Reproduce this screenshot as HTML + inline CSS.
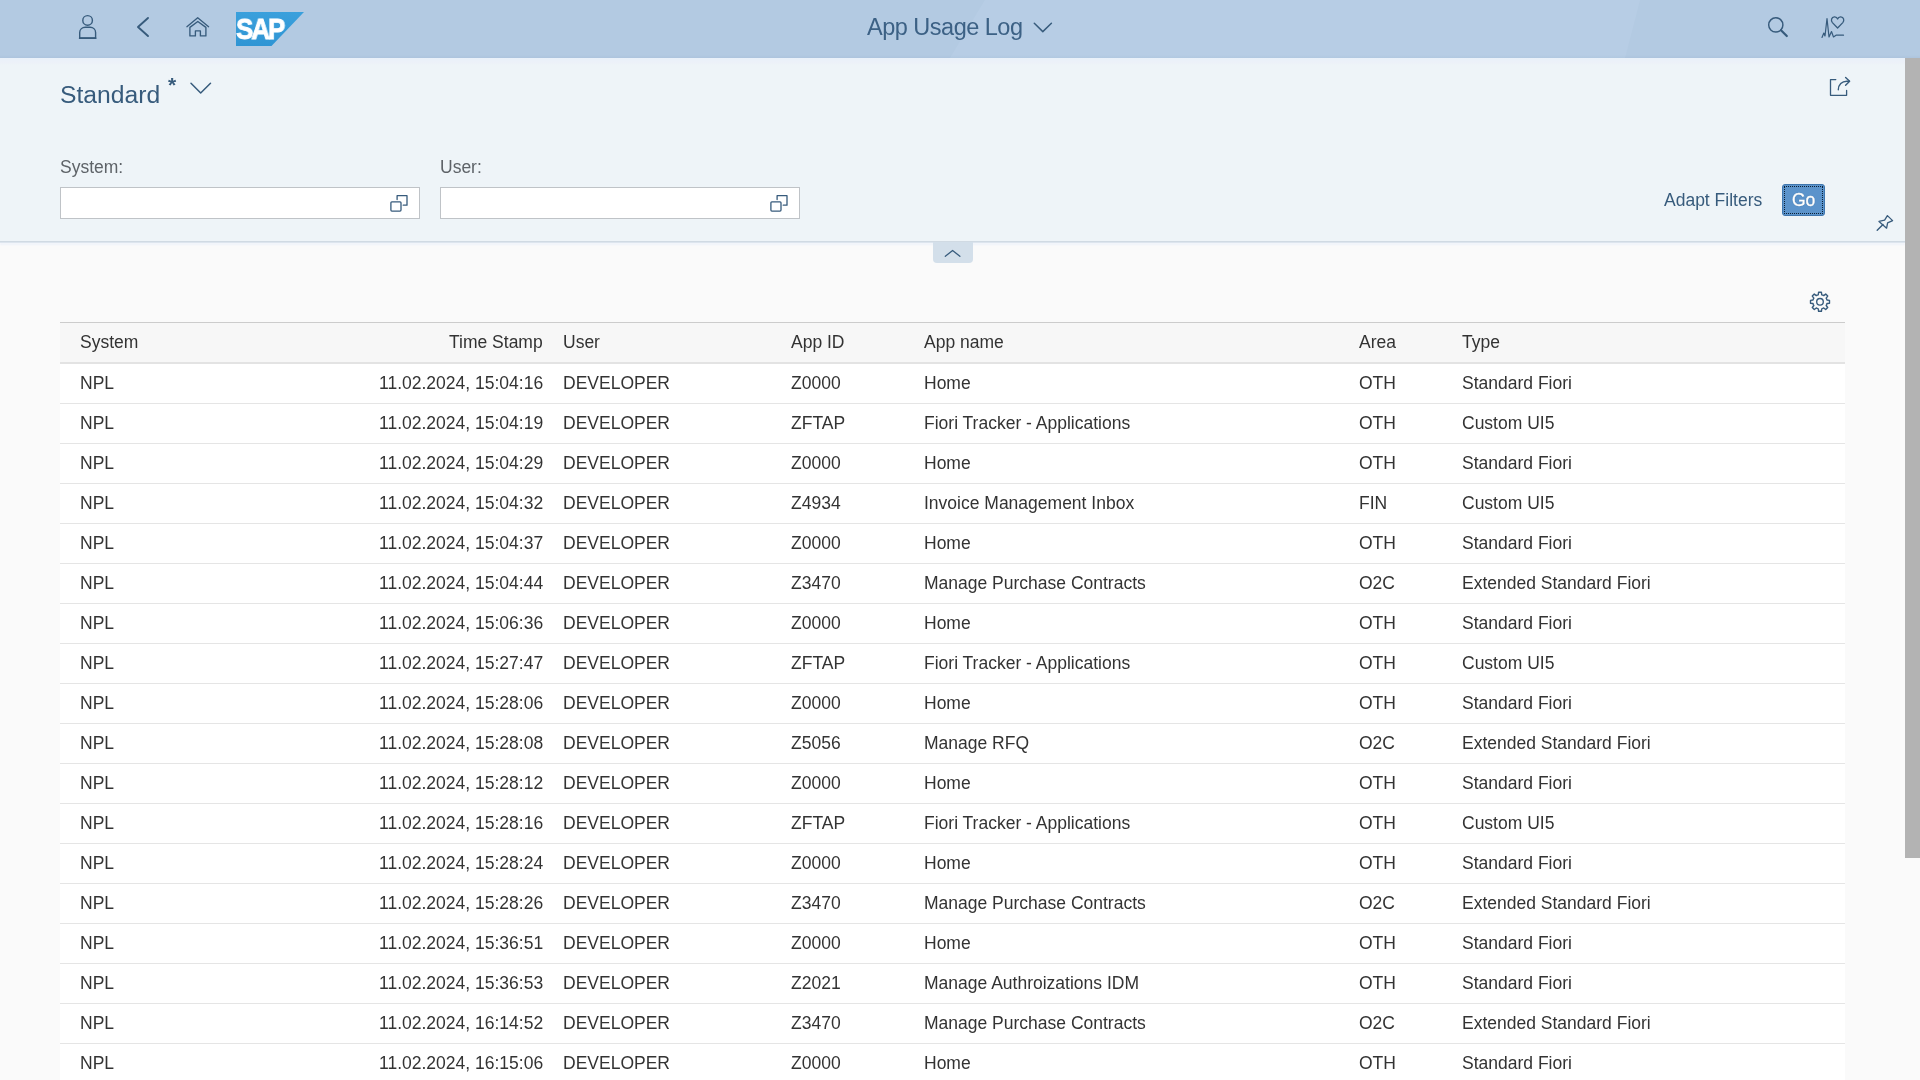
<!DOCTYPE html><html><head><meta charset="utf-8"><style>
*{margin:0;padding:0;box-sizing:border-box}
html,body{width:1920px;height:1080px;overflow:hidden;font-family:"Liberation Sans",sans-serif;background:#fafafa;color:#333}
#shell{position:absolute;left:0;top:0;width:1920px;height:58px;background:linear-gradient(#b3cae2 0,#b3cae2 55px,#adc4dd 58px);overflow:hidden}
#hdr{position:absolute;left:0;top:58px;width:1905px;height:183px;background:linear-gradient(#e9f1fa 0,#edf1f8 5px,#eef4f8 7px)}
#hline{position:absolute;left:0;top:241px;width:1905px;height:2px;background:linear-gradient(#d0dae3 50%,#dde5ee 50%);box-shadow:0 2px 2px #eef2fa}
#content{position:absolute;left:0;top:242px;width:1905px;height:838px;background:#fafafa}
#sb{position:absolute;left:1905px;top:58px;width:15px;height:800px;background:#b3b3b3}
#sbtrack{position:absolute;left:1905px;top:858px;width:15px;height:222px;background:#fafafa}
.t{position:absolute;white-space:nowrap;font-size:17.5px;line-height:20px;will-change:transform}
.row{position:absolute;left:60px;width:1785px;height:40px;background:#fff;border-bottom:1px solid #e5e5e5}
.thead{position:absolute;left:60px;top:322px;width:1785px;height:42px;background:#f7f7f7;border-top:1px solid #cccccc;border-bottom:2px solid #e3e3e3}
.inp{position:absolute;top:187px;width:360px;height:32px;background:#fff;border:1px solid #bfc3c7}
#icons{position:absolute;left:0;top:0;width:1920px;height:1080px;pointer-events:none}
.go{position:absolute;left:1782px;top:184px;width:43px;height:32px;background:#5b93cb;border:1px solid #3f76ae;border-radius:3px}
.go i{position:absolute;left:1px;top:1px;right:1px;bottom:1px;border:1px dotted #0b1f33}
.collapse{position:absolute;left:933px;top:242px;width:40px;height:21px;background:#d3dfea;border-radius:0 0 4px 4px}
</style></head><body><div id="shell"><div style="position:absolute;left:0;top:0;width:1920px;height:58px;background:linear-gradient(#b7cde5 0,#b7cde5 55px,#b1c8e0 58px);clip-path:polygon(985px 0,1640px 0,1625px 58px,950px 58px)"></div></div>
<div id="hdr"></div>
<div id="content"></div>
<div id="hline"></div>
<div class="t" style="left:867px;top:14px;font-size:23.5px;letter-spacing:-0.5px;line-height:26px;color:#3c6185">App Usage Log</div>
<div style="position:absolute;left:236px;top:12px;width:68px;height:34px;background:linear-gradient(#3aa0dc,#2f95d4);clip-path:polygon(0 0,100% 0,52.2% 100%,0 100%)"></div>
<div style="position:absolute;left:236px;top:12px;font-family:'Liberation Sans';font-weight:bold;font-size:29px;line-height:34px;color:#fff;letter-spacing:-2.4px;transform:scaleX(0.9);transform-origin:0 0;-webkit-text-stroke:0.9px #fff;will-change:transform">SAP</div>
<div class="t" style="left:60px;top:81px;font-size:24.7px;line-height:28px;color:#375b7c">Standard</div>
<div class="t" style="left:168px;top:75px;font-size:21px;font-weight:bold;line-height:20px;color:#375b7c">*</div>
<div class="t" style="left:60px;top:157px;color:#5e6368">System:</div>
<div class="t" style="left:440px;top:157px;color:#5e6368">User:</div>
<div class="inp" style="left:60px"></div>
<div class="inp" style="left:440px"></div>
<div class="t" style="left:1664px;top:190px;color:#375b7c">Adapt Filters</div>
<div class="go"><i></i></div>
<div class="t" style="left:1792px;top:190px;color:#fff;-webkit-text-stroke:0.35px #fff;text-shadow:0 0 1px #1f4a75">Go</div>
<div class="collapse"></div>
<div class="thead"></div>
<div class="t" style="left:80px;top:332px;">System</div>
<div class="t" style="left:563px;top:332px;">User</div>
<div class="t" style="left:791px;top:332px;">App ID</div>
<div class="t" style="left:924px;top:332px;">App name</div>
<div class="t" style="left:1359px;top:332px;">Area</div>
<div class="t" style="left:1462px;top:332px;">Type</div>
<div class="t" style="right:1377px;top:332px;">Time Stamp</div>
<div class="row" style="top:364px"></div>
<div class="t" style="left:80px;top:373px;">NPL</div>
<div class="t" style="right:1377px;top:373px;">11.02.2024, 15:04:16</div>
<div class="t" style="left:563px;top:373px;">DEVELOPER</div>
<div class="t" style="left:791px;top:373px;">Z0000</div>
<div class="t" style="left:924px;top:373px;">Home</div>
<div class="t" style="left:1359px;top:373px;">OTH</div>
<div class="t" style="left:1462px;top:373px;">Standard Fiori</div>
<div class="row" style="top:404px"></div>
<div class="t" style="left:80px;top:413px;">NPL</div>
<div class="t" style="right:1377px;top:413px;">11.02.2024, 15:04:19</div>
<div class="t" style="left:563px;top:413px;">DEVELOPER</div>
<div class="t" style="left:791px;top:413px;">ZFTAP</div>
<div class="t" style="left:924px;top:413px;">Fiori Tracker - Applications</div>
<div class="t" style="left:1359px;top:413px;">OTH</div>
<div class="t" style="left:1462px;top:413px;">Custom UI5</div>
<div class="row" style="top:444px"></div>
<div class="t" style="left:80px;top:453px;">NPL</div>
<div class="t" style="right:1377px;top:453px;">11.02.2024, 15:04:29</div>
<div class="t" style="left:563px;top:453px;">DEVELOPER</div>
<div class="t" style="left:791px;top:453px;">Z0000</div>
<div class="t" style="left:924px;top:453px;">Home</div>
<div class="t" style="left:1359px;top:453px;">OTH</div>
<div class="t" style="left:1462px;top:453px;">Standard Fiori</div>
<div class="row" style="top:484px"></div>
<div class="t" style="left:80px;top:493px;">NPL</div>
<div class="t" style="right:1377px;top:493px;">11.02.2024, 15:04:32</div>
<div class="t" style="left:563px;top:493px;">DEVELOPER</div>
<div class="t" style="left:791px;top:493px;">Z4934</div>
<div class="t" style="left:924px;top:493px;">Invoice Management Inbox</div>
<div class="t" style="left:1359px;top:493px;">FIN</div>
<div class="t" style="left:1462px;top:493px;">Custom UI5</div>
<div class="row" style="top:524px"></div>
<div class="t" style="left:80px;top:533px;">NPL</div>
<div class="t" style="right:1377px;top:533px;">11.02.2024, 15:04:37</div>
<div class="t" style="left:563px;top:533px;">DEVELOPER</div>
<div class="t" style="left:791px;top:533px;">Z0000</div>
<div class="t" style="left:924px;top:533px;">Home</div>
<div class="t" style="left:1359px;top:533px;">OTH</div>
<div class="t" style="left:1462px;top:533px;">Standard Fiori</div>
<div class="row" style="top:564px"></div>
<div class="t" style="left:80px;top:573px;">NPL</div>
<div class="t" style="right:1377px;top:573px;">11.02.2024, 15:04:44</div>
<div class="t" style="left:563px;top:573px;">DEVELOPER</div>
<div class="t" style="left:791px;top:573px;">Z3470</div>
<div class="t" style="left:924px;top:573px;">Manage Purchase Contracts</div>
<div class="t" style="left:1359px;top:573px;">O2C</div>
<div class="t" style="left:1462px;top:573px;">Extended Standard Fiori</div>
<div class="row" style="top:604px"></div>
<div class="t" style="left:80px;top:613px;">NPL</div>
<div class="t" style="right:1377px;top:613px;">11.02.2024, 15:06:36</div>
<div class="t" style="left:563px;top:613px;">DEVELOPER</div>
<div class="t" style="left:791px;top:613px;">Z0000</div>
<div class="t" style="left:924px;top:613px;">Home</div>
<div class="t" style="left:1359px;top:613px;">OTH</div>
<div class="t" style="left:1462px;top:613px;">Standard Fiori</div>
<div class="row" style="top:644px"></div>
<div class="t" style="left:80px;top:653px;">NPL</div>
<div class="t" style="right:1377px;top:653px;">11.02.2024, 15:27:47</div>
<div class="t" style="left:563px;top:653px;">DEVELOPER</div>
<div class="t" style="left:791px;top:653px;">ZFTAP</div>
<div class="t" style="left:924px;top:653px;">Fiori Tracker - Applications</div>
<div class="t" style="left:1359px;top:653px;">OTH</div>
<div class="t" style="left:1462px;top:653px;">Custom UI5</div>
<div class="row" style="top:684px"></div>
<div class="t" style="left:80px;top:693px;">NPL</div>
<div class="t" style="right:1377px;top:693px;">11.02.2024, 15:28:06</div>
<div class="t" style="left:563px;top:693px;">DEVELOPER</div>
<div class="t" style="left:791px;top:693px;">Z0000</div>
<div class="t" style="left:924px;top:693px;">Home</div>
<div class="t" style="left:1359px;top:693px;">OTH</div>
<div class="t" style="left:1462px;top:693px;">Standard Fiori</div>
<div class="row" style="top:724px"></div>
<div class="t" style="left:80px;top:733px;">NPL</div>
<div class="t" style="right:1377px;top:733px;">11.02.2024, 15:28:08</div>
<div class="t" style="left:563px;top:733px;">DEVELOPER</div>
<div class="t" style="left:791px;top:733px;">Z5056</div>
<div class="t" style="left:924px;top:733px;">Manage RFQ</div>
<div class="t" style="left:1359px;top:733px;">O2C</div>
<div class="t" style="left:1462px;top:733px;">Extended Standard Fiori</div>
<div class="row" style="top:764px"></div>
<div class="t" style="left:80px;top:773px;">NPL</div>
<div class="t" style="right:1377px;top:773px;">11.02.2024, 15:28:12</div>
<div class="t" style="left:563px;top:773px;">DEVELOPER</div>
<div class="t" style="left:791px;top:773px;">Z0000</div>
<div class="t" style="left:924px;top:773px;">Home</div>
<div class="t" style="left:1359px;top:773px;">OTH</div>
<div class="t" style="left:1462px;top:773px;">Standard Fiori</div>
<div class="row" style="top:804px"></div>
<div class="t" style="left:80px;top:813px;">NPL</div>
<div class="t" style="right:1377px;top:813px;">11.02.2024, 15:28:16</div>
<div class="t" style="left:563px;top:813px;">DEVELOPER</div>
<div class="t" style="left:791px;top:813px;">ZFTAP</div>
<div class="t" style="left:924px;top:813px;">Fiori Tracker - Applications</div>
<div class="t" style="left:1359px;top:813px;">OTH</div>
<div class="t" style="left:1462px;top:813px;">Custom UI5</div>
<div class="row" style="top:844px"></div>
<div class="t" style="left:80px;top:853px;">NPL</div>
<div class="t" style="right:1377px;top:853px;">11.02.2024, 15:28:24</div>
<div class="t" style="left:563px;top:853px;">DEVELOPER</div>
<div class="t" style="left:791px;top:853px;">Z0000</div>
<div class="t" style="left:924px;top:853px;">Home</div>
<div class="t" style="left:1359px;top:853px;">OTH</div>
<div class="t" style="left:1462px;top:853px;">Standard Fiori</div>
<div class="row" style="top:884px"></div>
<div class="t" style="left:80px;top:893px;">NPL</div>
<div class="t" style="right:1377px;top:893px;">11.02.2024, 15:28:26</div>
<div class="t" style="left:563px;top:893px;">DEVELOPER</div>
<div class="t" style="left:791px;top:893px;">Z3470</div>
<div class="t" style="left:924px;top:893px;">Manage Purchase Contracts</div>
<div class="t" style="left:1359px;top:893px;">O2C</div>
<div class="t" style="left:1462px;top:893px;">Extended Standard Fiori</div>
<div class="row" style="top:924px"></div>
<div class="t" style="left:80px;top:933px;">NPL</div>
<div class="t" style="right:1377px;top:933px;">11.02.2024, 15:36:51</div>
<div class="t" style="left:563px;top:933px;">DEVELOPER</div>
<div class="t" style="left:791px;top:933px;">Z0000</div>
<div class="t" style="left:924px;top:933px;">Home</div>
<div class="t" style="left:1359px;top:933px;">OTH</div>
<div class="t" style="left:1462px;top:933px;">Standard Fiori</div>
<div class="row" style="top:964px"></div>
<div class="t" style="left:80px;top:973px;">NPL</div>
<div class="t" style="right:1377px;top:973px;">11.02.2024, 15:36:53</div>
<div class="t" style="left:563px;top:973px;">DEVELOPER</div>
<div class="t" style="left:791px;top:973px;">Z2021</div>
<div class="t" style="left:924px;top:973px;">Manage Authroizations IDM</div>
<div class="t" style="left:1359px;top:973px;">OTH</div>
<div class="t" style="left:1462px;top:973px;">Standard Fiori</div>
<div class="row" style="top:1004px"></div>
<div class="t" style="left:80px;top:1013px;">NPL</div>
<div class="t" style="right:1377px;top:1013px;">11.02.2024, 16:14:52</div>
<div class="t" style="left:563px;top:1013px;">DEVELOPER</div>
<div class="t" style="left:791px;top:1013px;">Z3470</div>
<div class="t" style="left:924px;top:1013px;">Manage Purchase Contracts</div>
<div class="t" style="left:1359px;top:1013px;">O2C</div>
<div class="t" style="left:1462px;top:1013px;">Extended Standard Fiori</div>
<div class="row" style="top:1044px"></div>
<div class="t" style="left:80px;top:1053px;">NPL</div>
<div class="t" style="right:1377px;top:1053px;">11.02.2024, 16:15:06</div>
<div class="t" style="left:563px;top:1053px;">DEVELOPER</div>
<div class="t" style="left:791px;top:1053px;">Z0000</div>
<div class="t" style="left:924px;top:1053px;">Home</div>
<div class="t" style="left:1359px;top:1053px;">OTH</div>
<div class="t" style="left:1462px;top:1053px;">Standard Fiori</div>
<div id="sb"></div><div id="sbtrack"></div>
<svg id="icons" width="1920" height="1080" viewBox="0 0 1920 1080" fill="none" stroke="#375b7c" stroke-width="1.4" stroke-linecap="round" stroke-linejoin="round">
<!-- person -->
<circle cx="87.6" cy="20.4" r="4.8"/>
<path d="M79.7 38.2 V32.5 C79.7 29.3 82.3 27.3 85.3 27.3 H90.1 C93.1 27.3 95.6 29.3 95.6 32.5 V38.2 Z" />
<path d="M79.7 38.2 H95.6" stroke-width="1.8"/>
<!-- back -->
<path d="M148 18 L138 27 L148 36" stroke-width="1.9"/>
<!-- home -->
<path d="M186.9 26.7 L197.7 17.7 L208.6 26.7" stroke-width="1.3"/>
<path d="M189.9 27.4 L197.8 21.5 L205.9 27.4 V35.9 H200.4 V30.9 H195.4 V35.9 H189.9 Z" stroke-width="1.35"/>
<!-- title chevron -->
<path d="M1034.3 23.3 L1042.8 31.6 L1051.4 23.3" stroke-width="1.5"/>
<!-- search -->
<circle cx="1775.8" cy="24.9" r="7.1" stroke-width="1.45"/>
<path d="M1781 30.2 L1786.8 36" stroke-width="2.2"/>
<!-- health -->
<path d="M1837.6 28 L1832.4 22.6 C1830.6 20.6 1831.4 17 1834.4 16.8 C1836 16.7 1837.2 17.8 1837.6 19 C1838 17.8 1839.2 16.7 1840.8 16.8 C1843.8 17 1844.6 20.6 1842.8 22.6 Z" stroke-width="1.3"/>
<path d="M1822 37.5 L1823.8 33 L1825 36 L1827 18.5 L1829 37 L1831.5 31.5 L1833.5 37 L1836 35.2 H1843.5" stroke-width="1.2"/>
<!-- Standard chevron -->
<path d="M191 83.2 L200.7 93 L210.5 83.2" stroke-width="1.5"/>
<!-- share -->
<path d="M1835.8 79.6 H1830.5 V95.3 H1846.6 V90.4" stroke-width="1.3"/>
<path d="M1838.3 89.8 C1838.3 84.5 1842 81.2 1846.8 81.2 H1849.4" stroke-width="1.4"/>
<path d="M1845.6 77.4 L1849.6 81.3 L1845.6 85.3" stroke-width="1.4"/>
<!-- value help -->
<rect x="390.9" y="201.8" width="10.1" height="9.3" rx="1" stroke-width="1.3"/>
<path d="M397.1 199.6 V195.7 H407 V205.2 H403.2" stroke-width="1.3"/>
<rect x="770.9" y="201.8" width="10.1" height="9.3" rx="1" stroke-width="1.3"/>
<path d="M777.1 199.6 V195.7 H787 V205.2 H783.2" stroke-width="1.3"/>
<!-- pin -->
<path d="M1877.2 230.3 L1883 224.4" stroke-width="1.4"/>
<path d="M1887.4 215.6 L1892.6 220.6 L1887.6 222.8 L1886.6 228.2 L1879 221.4 L1884.6 220.2 Z" stroke-width="1.3"/>
<!-- collapse chevron -->
<path d="M945.3 256.3 L952.6 250.5 L959.9 256.3" stroke-width="1.25"/>
<!-- gear -->
<path d="M1817.24 295.15 L1818.26 294.81 L1818.58 292.31 L1821.42 292.31 L1821.74 294.81 L1822.76 295.15 L1823.71 295.63 L1825.71 294.08 L1827.72 296.09 L1826.17 298.09 L1826.65 299.04 L1826.99 300.06 L1829.49 300.38 L1829.49 303.22 L1826.99 303.54 L1826.65 304.56 L1826.17 305.51 L1827.72 307.51 L1825.71 309.52 L1823.71 307.97 L1822.76 308.45 L1821.74 308.79 L1821.42 311.29 L1818.58 311.29 L1818.26 308.79 L1817.24 308.45 L1816.29 307.97 L1814.29 309.52 L1812.28 307.51 L1813.83 305.51 L1813.35 304.56 L1813.01 303.54 L1810.51 303.22 L1810.51 300.38 L1813.01 300.06 L1813.35 299.04 L1813.83 298.09 L1812.28 296.09 L1814.29 294.08 L1816.29 295.63 Z" stroke-width="1.4"/>
<circle cx="1820" cy="301.8" r="3.3" stroke-width="1.35"/>
</svg></body></html>
